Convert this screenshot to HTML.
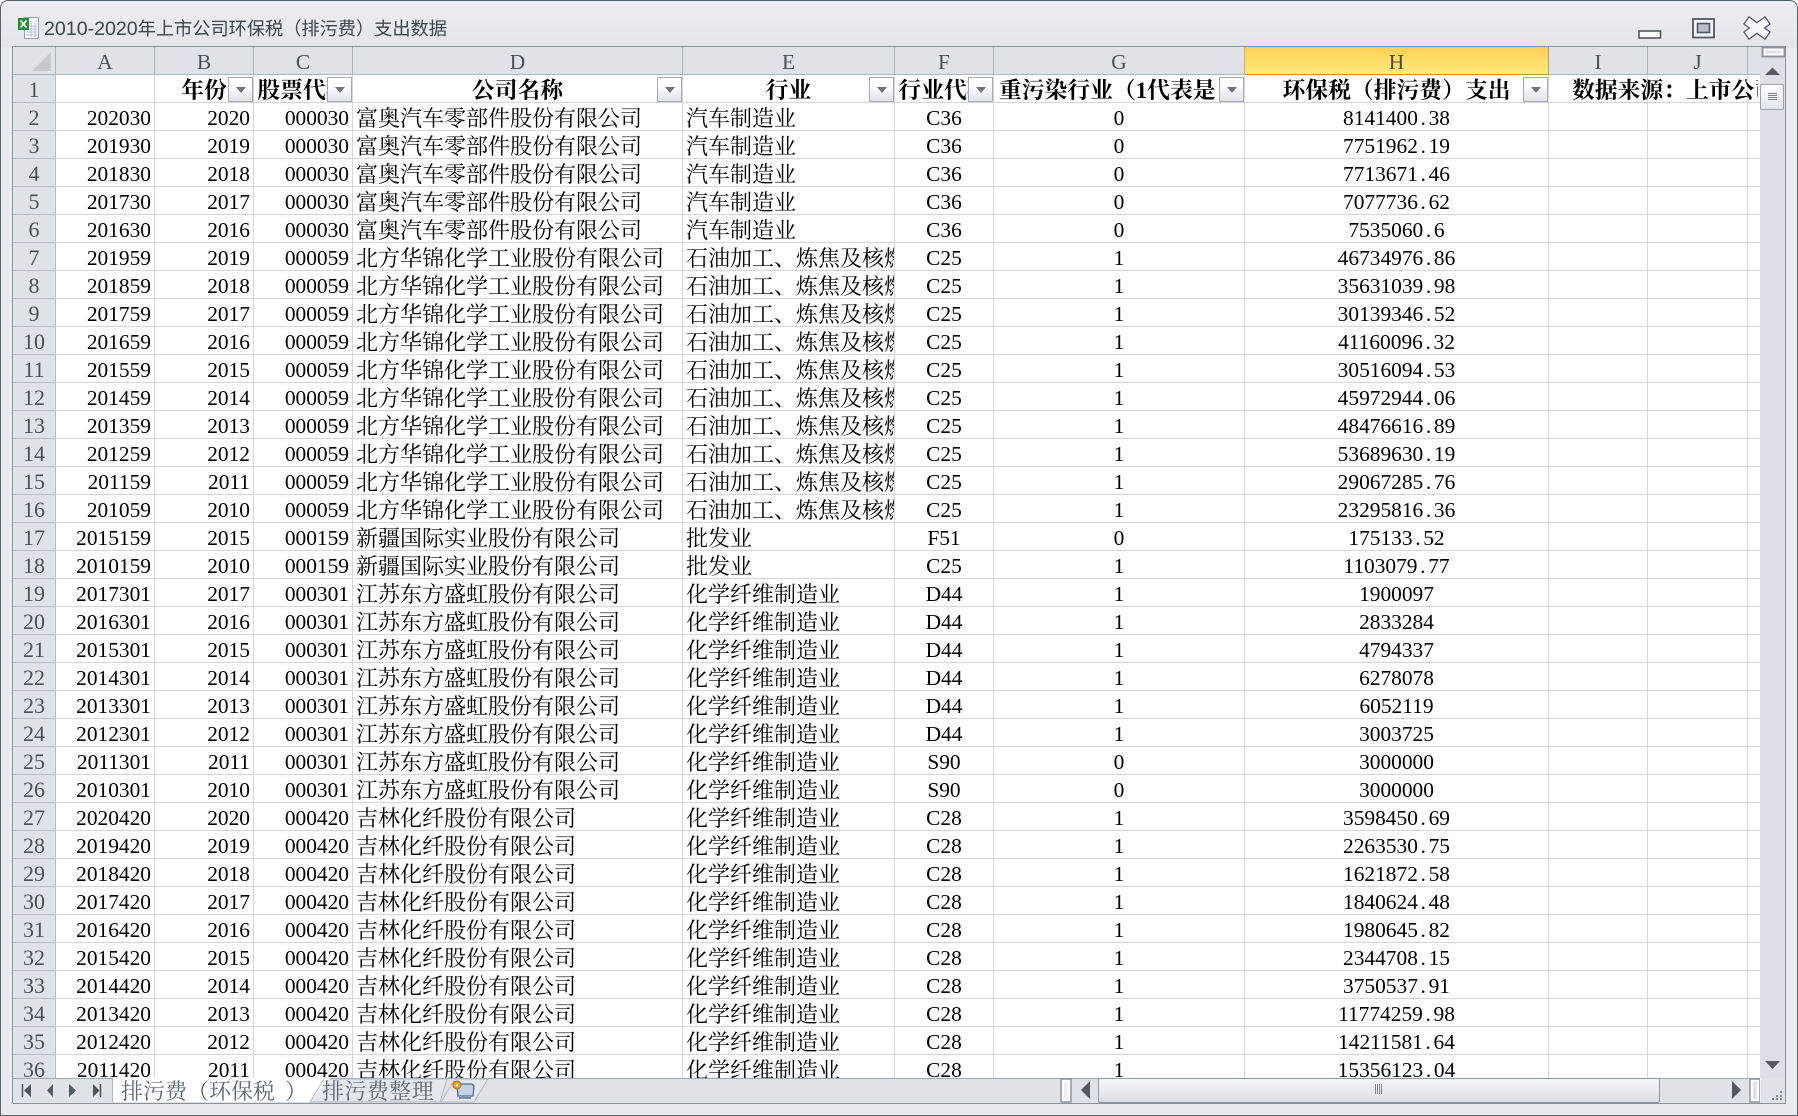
<!DOCTYPE html>
<html lang="zh"><head><meta charset="utf-8"><title>2010-2020年上市公司环保税（排污费）支出数据</title>
<style>
html,body{margin:0;padding:0;width:1798px;height:1116px;overflow:hidden;background:#fff}
#w{position:absolute;left:0;top:0;width:1796px;height:1114px;border:1px solid #59616b;border-radius:8px 8px 0 0;background:linear-gradient(#edeef1 0,#e3e5e9 46px,#e9ebee 47px)}
#t{position:absolute;left:44px;top:13px;font:18.2px/30px "Noto Sans CJK SC","Liberation Sans",sans-serif;color:#3d4650;white-space:nowrap}
#t span{font:19.6px "Liberation Sans",sans-serif}
#g{position:absolute;left:12px;top:46px;width:1774px;height:1057px;border:1px solid #8b929b;box-sizing:border-box;background:#dfe2e7;overflow:hidden}
#s{position:absolute;left:0;top:0;width:1747px;height:1031px;overflow:hidden;background:#fff}
table{border-collapse:separate;border-spacing:0;table-layout:fixed;width:1747px;font:21.4px "Liberation Serif","Noto Serif CJK SC",serif;color:#000}
td{padding:3px 3px 0 4px;line-height:24px;height:24px;box-sizing:content-box;border:solid #d6d6d6;border-width:0 1px 1px 0;white-space:nowrap;overflow:hidden;text-align:right;position:relative}
td.l{text-align:left;font-size:22px;padding:5px 0 0 3px;line-height:22px;height:22px}
td.c{text-align:center;padding:3px 0 0}
.r{background:#dfe2e7;border-color:#b9bec6;color:#4a5159;text-align:center;padding:3px 0 0;font-size:22px}
tr.h td{background:#dfe2e7;border-color:#aeb4bc;color:#4a5159;text-align:center;padding:3px 0 0;line-height:24px;height:24px;font-size:21.4px}
tr.h td.sel{background:linear-gradient(#fdd056,#ffe97a);border-right-color:#c99c3c;border-bottom-color:#c2923a;color:#4a4a3a}
tr.f td{font-weight:bold;font-size:22.8px;text-align:center;padding:5px 0 0;line-height:22px;height:22px;border-bottom-color:#d6d6d6}
tr.f td.r{font-weight:normal;font-size:22px;border-bottom-color:#b9bec6;padding:3px 0 0;line-height:24px;height:24px}
tr.f td.e{text-align:left;padding-left:5px}
b.f{position:absolute;right:0;top:2px;width:25px;height:25px;box-sizing:border-box;border:1px solid #a5abb4;background:linear-gradient(#fff 30%,#dfe3ea);z-index:2}
b.f:after{content:"";position:absolute;left:7px;top:9px;border:5px solid transparent;border-top:6px solid #6f7379;border-bottom:0}
i{font-style:normal;display:inline-block;width:.5em;text-align:center}
#o{position:absolute;left:1572px;top:76px;width:186px;height:26px;overflow:hidden;font:bold 22.8px/29px "Liberation Serif","Noto Serif CJK SC",serif;white-space:nowrap;color:#000;z-index:3}
#tab{position:absolute;left:0;top:0;z-index:5}
#tab text{font-family:"Liberation Serif","Noto Serif CJK SC",serif;font-size:22px;fill:#5d6a77}
svg{position:absolute;left:0;top:0;overflow:visible}
</style></head>
<body>
<div id="w"></div>
<div id="t"><span>2010-2020</span>年上市公司环保税（排污费）支出数据</div>
<div id="g"></div>
<div id="s" style="position:absolute;left:13px;top:47px">
<table>
<colgroup><col style="width:43px"><col style="width:99px"><col style="width:99px"><col style="width:99px"><col style="width:330px"><col style="width:212px"><col style="width:99px"><col style="width:251px"><col style="width:304px"><col style="width:99px"><col style="width:100px"><col style="width:13px"></colgroup>
<tr class="h"><td></td><td>A</td><td>B</td><td>C</td><td>D</td><td>E</td><td>F</td><td>G</td><td class="sel">H</td><td>I</td><td>J</td><td style="border-right:0"></td></tr>
<tr class="f"><td class="r">1</td><td></td><td>年份<b class="f"></b></td><td>股票代码<b class="f"></b></td><td>公司名称<b class="f"></b></td><td>行业<b class="f"></b></td><td>行业代码<b class="f"></b></td><td class="e">重污染行业（1代表是<b class="f"></b></td><td>环保税（排污费）支出<b class="f"></b></td><td></td><td></td><td></td></tr>
<tr><td class="r">2</td><td>202030</td><td>2020</td><td>000030</td><td class="l">富奥汽车零部件股份有限公司</td><td class="l">汽车制造业</td><td class="c">C36</td><td class="c">0</td><td class="c">8141400<i>.</i>38</td><td></td><td></td><td></td></tr>
<tr><td class="r">3</td><td>201930</td><td>2019</td><td>000030</td><td class="l">富奥汽车零部件股份有限公司</td><td class="l">汽车制造业</td><td class="c">C36</td><td class="c">0</td><td class="c">7751962<i>.</i>19</td><td></td><td></td><td></td></tr>
<tr><td class="r">4</td><td>201830</td><td>2018</td><td>000030</td><td class="l">富奥汽车零部件股份有限公司</td><td class="l">汽车制造业</td><td class="c">C36</td><td class="c">0</td><td class="c">7713671<i>.</i>46</td><td></td><td></td><td></td></tr>
<tr><td class="r">5</td><td>201730</td><td>2017</td><td>000030</td><td class="l">富奥汽车零部件股份有限公司</td><td class="l">汽车制造业</td><td class="c">C36</td><td class="c">0</td><td class="c">7077736<i>.</i>62</td><td></td><td></td><td></td></tr>
<tr><td class="r">6</td><td>201630</td><td>2016</td><td>000030</td><td class="l">富奥汽车零部件股份有限公司</td><td class="l">汽车制造业</td><td class="c">C36</td><td class="c">0</td><td class="c">7535060<i>.</i>6</td><td></td><td></td><td></td></tr>
<tr><td class="r">7</td><td>201959</td><td>2019</td><td>000059</td><td class="l">北方华锦化学工业股份有限公司</td><td class="l">石油加工、炼焦及核燃料加工业</td><td class="c">C25</td><td class="c">1</td><td class="c">46734976<i>.</i>86</td><td></td><td></td><td></td></tr>
<tr><td class="r">8</td><td>201859</td><td>2018</td><td>000059</td><td class="l">北方华锦化学工业股份有限公司</td><td class="l">石油加工、炼焦及核燃料加工业</td><td class="c">C25</td><td class="c">1</td><td class="c">35631039<i>.</i>98</td><td></td><td></td><td></td></tr>
<tr><td class="r">9</td><td>201759</td><td>2017</td><td>000059</td><td class="l">北方华锦化学工业股份有限公司</td><td class="l">石油加工、炼焦及核燃料加工业</td><td class="c">C25</td><td class="c">1</td><td class="c">30139346<i>.</i>52</td><td></td><td></td><td></td></tr>
<tr><td class="r">10</td><td>201659</td><td>2016</td><td>000059</td><td class="l">北方华锦化学工业股份有限公司</td><td class="l">石油加工、炼焦及核燃料加工业</td><td class="c">C25</td><td class="c">1</td><td class="c">41160096<i>.</i>32</td><td></td><td></td><td></td></tr>
<tr><td class="r">11</td><td>201559</td><td>2015</td><td>000059</td><td class="l">北方华锦化学工业股份有限公司</td><td class="l">石油加工、炼焦及核燃料加工业</td><td class="c">C25</td><td class="c">1</td><td class="c">30516094<i>.</i>53</td><td></td><td></td><td></td></tr>
<tr><td class="r">12</td><td>201459</td><td>2014</td><td>000059</td><td class="l">北方华锦化学工业股份有限公司</td><td class="l">石油加工、炼焦及核燃料加工业</td><td class="c">C25</td><td class="c">1</td><td class="c">45972944<i>.</i>06</td><td></td><td></td><td></td></tr>
<tr><td class="r">13</td><td>201359</td><td>2013</td><td>000059</td><td class="l">北方华锦化学工业股份有限公司</td><td class="l">石油加工、炼焦及核燃料加工业</td><td class="c">C25</td><td class="c">1</td><td class="c">48476616<i>.</i>89</td><td></td><td></td><td></td></tr>
<tr><td class="r">14</td><td>201259</td><td>2012</td><td>000059</td><td class="l">北方华锦化学工业股份有限公司</td><td class="l">石油加工、炼焦及核燃料加工业</td><td class="c">C25</td><td class="c">1</td><td class="c">53689630<i>.</i>19</td><td></td><td></td><td></td></tr>
<tr><td class="r">15</td><td>201159</td><td>2011</td><td>000059</td><td class="l">北方华锦化学工业股份有限公司</td><td class="l">石油加工、炼焦及核燃料加工业</td><td class="c">C25</td><td class="c">1</td><td class="c">29067285<i>.</i>76</td><td></td><td></td><td></td></tr>
<tr><td class="r">16</td><td>201059</td><td>2010</td><td>000059</td><td class="l">北方华锦化学工业股份有限公司</td><td class="l">石油加工、炼焦及核燃料加工业</td><td class="c">C25</td><td class="c">1</td><td class="c">23295816<i>.</i>36</td><td></td><td></td><td></td></tr>
<tr><td class="r">17</td><td>2015159</td><td>2015</td><td>000159</td><td class="l">新疆国际实业股份有限公司</td><td class="l">批发业</td><td class="c">F51</td><td class="c">0</td><td class="c">175133<i>.</i>52</td><td></td><td></td><td></td></tr>
<tr><td class="r">18</td><td>2010159</td><td>2010</td><td>000159</td><td class="l">新疆国际实业股份有限公司</td><td class="l">批发业</td><td class="c">C25</td><td class="c">1</td><td class="c">1103079<i>.</i>77</td><td></td><td></td><td></td></tr>
<tr><td class="r">19</td><td>2017301</td><td>2017</td><td>000301</td><td class="l">江苏东方盛虹股份有限公司</td><td class="l">化学纤维制造业</td><td class="c">D44</td><td class="c">1</td><td class="c">1900097</td><td></td><td></td><td></td></tr>
<tr><td class="r">20</td><td>2016301</td><td>2016</td><td>000301</td><td class="l">江苏东方盛虹股份有限公司</td><td class="l">化学纤维制造业</td><td class="c">D44</td><td class="c">1</td><td class="c">2833284</td><td></td><td></td><td></td></tr>
<tr><td class="r">21</td><td>2015301</td><td>2015</td><td>000301</td><td class="l">江苏东方盛虹股份有限公司</td><td class="l">化学纤维制造业</td><td class="c">D44</td><td class="c">1</td><td class="c">4794337</td><td></td><td></td><td></td></tr>
<tr><td class="r">22</td><td>2014301</td><td>2014</td><td>000301</td><td class="l">江苏东方盛虹股份有限公司</td><td class="l">化学纤维制造业</td><td class="c">D44</td><td class="c">1</td><td class="c">6278078</td><td></td><td></td><td></td></tr>
<tr><td class="r">23</td><td>2013301</td><td>2013</td><td>000301</td><td class="l">江苏东方盛虹股份有限公司</td><td class="l">化学纤维制造业</td><td class="c">D44</td><td class="c">1</td><td class="c">6052119</td><td></td><td></td><td></td></tr>
<tr><td class="r">24</td><td>2012301</td><td>2012</td><td>000301</td><td class="l">江苏东方盛虹股份有限公司</td><td class="l">化学纤维制造业</td><td class="c">D44</td><td class="c">1</td><td class="c">3003725</td><td></td><td></td><td></td></tr>
<tr><td class="r">25</td><td>2011301</td><td>2011</td><td>000301</td><td class="l">江苏东方盛虹股份有限公司</td><td class="l">化学纤维制造业</td><td class="c">S90</td><td class="c">0</td><td class="c">3000000</td><td></td><td></td><td></td></tr>
<tr><td class="r">26</td><td>2010301</td><td>2010</td><td>000301</td><td class="l">江苏东方盛虹股份有限公司</td><td class="l">化学纤维制造业</td><td class="c">S90</td><td class="c">0</td><td class="c">3000000</td><td></td><td></td><td></td></tr>
<tr><td class="r">27</td><td>2020420</td><td>2020</td><td>000420</td><td class="l">吉林化纤股份有限公司</td><td class="l">化学纤维制造业</td><td class="c">C28</td><td class="c">1</td><td class="c">3598450<i>.</i>69</td><td></td><td></td><td></td></tr>
<tr><td class="r">28</td><td>2019420</td><td>2019</td><td>000420</td><td class="l">吉林化纤股份有限公司</td><td class="l">化学纤维制造业</td><td class="c">C28</td><td class="c">1</td><td class="c">2263530<i>.</i>75</td><td></td><td></td><td></td></tr>
<tr><td class="r">29</td><td>2018420</td><td>2018</td><td>000420</td><td class="l">吉林化纤股份有限公司</td><td class="l">化学纤维制造业</td><td class="c">C28</td><td class="c">1</td><td class="c">1621872<i>.</i>58</td><td></td><td></td><td></td></tr>
<tr><td class="r">30</td><td>2017420</td><td>2017</td><td>000420</td><td class="l">吉林化纤股份有限公司</td><td class="l">化学纤维制造业</td><td class="c">C28</td><td class="c">1</td><td class="c">1840624<i>.</i>48</td><td></td><td></td><td></td></tr>
<tr><td class="r">31</td><td>2016420</td><td>2016</td><td>000420</td><td class="l">吉林化纤股份有限公司</td><td class="l">化学纤维制造业</td><td class="c">C28</td><td class="c">1</td><td class="c">1980645<i>.</i>82</td><td></td><td></td><td></td></tr>
<tr><td class="r">32</td><td>2015420</td><td>2015</td><td>000420</td><td class="l">吉林化纤股份有限公司</td><td class="l">化学纤维制造业</td><td class="c">C28</td><td class="c">1</td><td class="c">2344708<i>.</i>15</td><td></td><td></td><td></td></tr>
<tr><td class="r">33</td><td>2014420</td><td>2014</td><td>000420</td><td class="l">吉林化纤股份有限公司</td><td class="l">化学纤维制造业</td><td class="c">C28</td><td class="c">1</td><td class="c">3750537<i>.</i>91</td><td></td><td></td><td></td></tr>
<tr><td class="r">34</td><td>2013420</td><td>2013</td><td>000420</td><td class="l">吉林化纤股份有限公司</td><td class="l">化学纤维制造业</td><td class="c">C28</td><td class="c">1</td><td class="c">11774259<i>.</i>98</td><td></td><td></td><td></td></tr>
<tr><td class="r">35</td><td>2012420</td><td>2012</td><td>000420</td><td class="l">吉林化纤股份有限公司</td><td class="l">化学纤维制造业</td><td class="c">C28</td><td class="c">1</td><td class="c">14211581<i>.</i>64</td><td></td><td></td><td></td></tr>
<tr><td class="r">36</td><td>2011420</td><td>2011</td><td>000420</td><td class="l">吉林化纤股份有限公司</td><td class="l">化学纤维制造业</td><td class="c">C28</td><td class="c">1</td><td class="c">15356123<i>.</i>04</td><td></td><td></td><td></td></tr>
</table>
</div>
<div id="o">数据来源：上市公司年报</div>
<svg id="tab" width="1798" height="1116" viewBox="0 0 1798 1116">
<defs>
<linearGradient id="sb" x1="0" y1="0" x2="0" y2="1"><stop offset="0" stop-color="#f3f4f7"/><stop offset=".7" stop-color="#e6e8ee"/><stop offset="1" stop-color="#d5d8de"/></linearGradient>
<linearGradient id="bt" x1="0" y1="0" x2="0" y2="1"><stop offset="0" stop-color="#fff"/><stop offset="1" stop-color="#e0e4ea"/></linearGradient>
</defs>
<!-- corner triangle -->
<polygon points="51,52 51,71 32,71" fill="#c5c8cd"/>
<!-- excel icon -->
<rect x="24.5" y="17.5" width="14" height="21" fill="#f4f8fc" stroke="#8fa6c2"/>
<path d="M27 26h10M27 29h10M27 32h10M27 35h10M31 23v14M35 23v14" stroke="#b5c6da" fill="none"/>
<rect x="18" y="18" width="11" height="12" fill="#2f8a3a"/>
<path d="M20.5 20.5l6 7M26.5 20.5l-6 7" stroke="#e8f5e3" stroke-width="1.8" fill="none"/>
<!-- window controls -->
<rect x="1639" y="31" width="21.5" height="7" fill="#f8f9fb" stroke="#4f5869" stroke-width="1.6"/>
<rect x="1693" y="19" width="21" height="18.5" fill="#f4f5f7" stroke="#4f5869" stroke-width="1.8"/>
<rect x="1697.5" y="23.5" width="12" height="9" fill="#b8bcc4" stroke="#4f5869" stroke-width="1.6"/>
<path d="M1750 23L1764 33M1764 23L1750 33" stroke="#4f5869" stroke-width="10" stroke-linecap="square" fill="none"/>
<path d="M1750 23L1764 33M1764 23L1750 33" stroke="#f6f7f9" stroke-width="7.5" stroke-linecap="square" fill="none"/>
<!-- vertical scrollbar -->
<rect x="1760" y="47" width="25" height="1031" fill="#dde0e6"/>
<rect x="1762.5" y="47.5" width="22" height="9" fill="#fff" stroke="#8e949d" stroke-width="2"/>
<rect x="1765.5" y="50.5" width="16" height="3" fill="#dfe3e9"/>
<polygon points="1765,75 1772.5,67.5 1780,75" fill="#56595f"/>
<rect x="1760.5" y="84.5" width="23" height="25" rx="1" fill="url(#bt)" stroke="#9aa1ab"/>
<path d="M1768 93.5h9M1768 95.5h9M1768 97.5h9M1768 99.5h9" stroke="#7c828a" fill="none"/>
<polygon points="1765,1061 1780,1061 1772.5,1069" fill="#56595f"/>
<!-- nav bar + tab strip -->
<rect x="13" y="1078" width="1772" height="25" fill="#dfe2e7"/>
<path d="M13 1078.5H1785" stroke="#a0a6af" fill="none"/>
<path d="M112.5 1079V1102" stroke="#b5bac2" fill="none"/>
<path d="M22.5 1084v13" stroke="#4f555d" stroke-width="1.5" fill="none"/>
<polygon points="31,1084 31,1097 24,1090.5" fill="#4f555d"/>
<polygon points="53,1084 53,1097 47,1090.5" fill="#565c64"/>
<polygon points="69,1084 69,1097 76,1090.5" fill="#565c64"/>
<path d="M100.5 1084v13" stroke="#4f555d" stroke-width="1.5" fill="none"/>
<polygon points="93,1084 93,1097 99.5,1090.5" fill="#4f555d"/>
<!-- tabs -->
<polygon points="441,1102 455,1079 488,1079 474,1102" fill="#e4e7ec" stroke="#b3b8c0"/>
<polygon points="310,1102 324,1079 447,1079 440,1102" fill="#e4e7ec" stroke="#b3b8c0"/>
<polygon points="113,1078 330,1078 310,1102 113,1102" fill="#fff"/>
<path d="M310 1102L324 1079" stroke="#b3b8c0" fill="none"/>
<text x="121" y="1099">排污费（环保税</text>
<text x="285" y="1099">）</text>
<text x="322" y="1099" letter-spacing=".4">排污费整理</text>
<path d="M457 1084h15l2 2-1 10h-15z" fill="#c3d3e6" stroke="#4f6a8c" stroke-width="1.3"/>
<path d="M459 1098h12" stroke="#7b8fa8" stroke-width="2" fill="none"/>
<circle cx="457" cy="1085" r="4" fill="#e79a2b" stroke="#b96d10"/>
<circle cx="457" cy="1085" r="1.5" fill="#fbe7a6"/>
<!-- horizontal scrollbar -->
<rect x="1061" y="1079" width="10" height="23" fill="#fff" stroke="#8e949d" stroke-width="1.5"/>
<rect x="1064" y="1082" width="4" height="17" fill="#eef0f4"/>
<polygon points="1090,1081 1090,1099 1081,1090" fill="#54585f"/>
<rect x="1098.5" y="1078.5" width="561" height="24" rx="1.5" fill="url(#sb)" stroke="#8f96a0"/>
<path d="M1375.5 1084v10M1377.5 1084v10M1379.5 1084v10M1381.5 1084v10" stroke="#7f858e" fill="none"/>
<polygon points="1732,1081 1732,1099 1741,1090" fill="#54585f"/>
<rect x="1750" y="1079" width="10" height="23" fill="#fff" stroke="#8e949d" stroke-width="1.5"/>
<rect x="1753" y="1082" width="4" height="17" fill="#dfe3e9"/>
<rect x="1760" y="1078" width="25" height="25" fill="#dfe2e7"/>
<path d="M1760.5 1078v25" stroke="#eef0f3" fill="none"/>
<path d="M1780 1091h2v2h-2zM1776 1095h2v2h-2zM1780 1095h2v2h-2zM1772 1098h2v2h-2zM1776 1098h2v2h-2zM1780 1098h2v2h-2z" fill="#7f858e"/>
<path d="M13 1103.5H1786" stroke="#8b929b" fill="none"/>
</svg>
</body></html>
